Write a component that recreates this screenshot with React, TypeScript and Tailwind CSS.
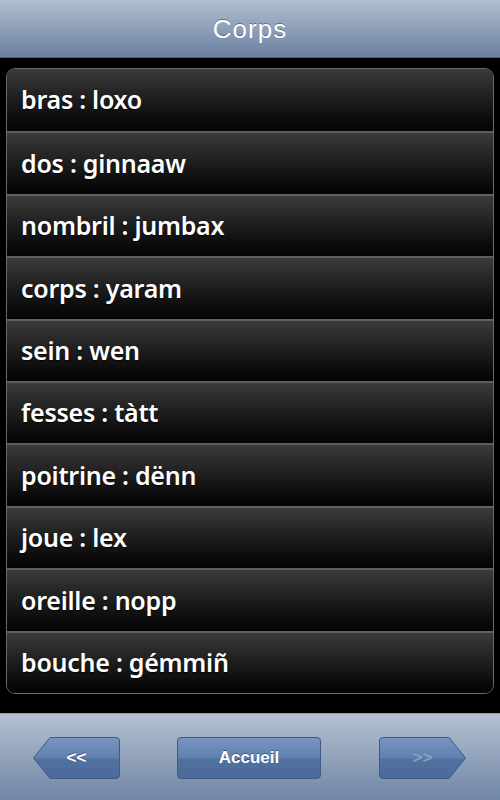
import React from "react";

const items = [
  "bras : loxo",
  "dos : ginnaaw",
  "nombril : jumbax",
  "corps : yaram",
  "sein : wen",
  "fesses : tàtt",
  "poitrine : dënn",
  "joue : lex",
  "oreille : nopp",
  "bouche : gémmiñ",
];

function NavButton({ label, dir, disabled }: { label: string; dir: "left" | "right" | "none"; disabled?: boolean }) {
  const w = dir === "none" ? 144 : 87;
  const h = 42;
  const pt = 17;
  let d = "";
  if (dir === "left") {
    d = `M${pt} 0.5 H${w - 4} Q${w - 0.5} 0.5 ${w - 0.5} 4 V${h - 4} Q${w - 0.5} ${h - 0.5} ${w - 4} ${h - 0.5} H${pt} L0.5 ${h / 2} Z`;
  } else if (dir === "right") {
    d = `M${w - pt} 0.5 H4 Q0.5 0.5 0.5 4 V${h - 4} Q0.5 ${h - 0.5} 4 ${h - 0.5} H${w - pt} L${w - 0.5} ${h / 2} Z`;
  } else {
    d = `M4 0.5 H${w - 4} Q${w - 0.5} 0.5 ${w - 0.5} 4 V${h - 4} Q${w - 0.5} ${h - 0.5} ${w - 4} ${h - 0.5} H4 Q0.5 ${h - 0.5} 0.5 ${h - 4} V4 Q0.5 0.5 4 0.5 Z`;
  }
  const id = `g-${dir}`;
  return (
    <div className="relative" style={{ width: w, height: h }}>
      <svg width={w} height={h} className="absolute inset-0">
        <defs>
          <linearGradient id={id} x1="0" y1="0" x2="0" y2="1">
            <stop offset="0" stopColor="#7a96c0" />
            <stop offset="0.5" stopColor="#6080b0" />
            <stop offset="0.52" stopColor="#51729f" />
            <stop offset="1" stopColor="#4a6a9b" />
          </linearGradient>
        </defs>
        <path d={d} fill={`url(#${id})`} stroke="#3e5a86" strokeWidth="1" />
      </svg>
      <div
        className={`absolute inset-0 flex items-center justify-center text-[17px] font-bold ${disabled ? "text-[#8c9fbd]" : "text-white"}`}
        style={{ fontFamily: "'Liberation Sans', Arial, sans-serif", textShadow: disabled ? "none" : "0 -1px 0 rgba(0,0,0,0.35)" }}
      >
        {label}
      </div>
    </div>
  );
}

export default function App() {
  return (
    <div className="w-[500px] h-[800px] bg-black flex flex-col overflow-hidden">
      <div className="h-[58px] flex items-center justify-center bg-gradient-to-b from-[#b3bfd0] to-[#6b80a2] border-b border-[#4f607c]">
        <span
          className="text-white text-[26px] tracking-[1px] pt-[1px]"
          style={{ fontFamily: "'Liberation Sans', Arial, sans-serif", textShadow: "0 -1px 0 rgba(0,0,0,0.35)" }}
        >
          Corps
        </span>
      </div>
      <div className="flex-1 px-[6px] pt-[10px]">
        <div className="w-[488px] rounded-[9px] border border-[#6a6a6a] overflow-hidden">
          {items.map((t, i) => (
            <div
              key={t}
              className={`h-[62.4px] flex items-center pl-[14px] bg-gradient-to-b from-[#3b3b3b] to-[#040404] ${i > 0 ? "border-t-2 border-[#5e5e5e]" : ""}`}
            >
              <span
                className="text-white text-[25px] font-semibold tracking-[-0.25px]"
                style={{ fontFamily: "'Noto Sans', 'Open Sans', sans-serif", textShadow: "0 1px 1px rgba(0,0,0,0.8)" }}
              >
                {t}
              </span>
            </div>
          ))}
        </div>
      </div>
      <div className="h-[87px] bg-gradient-to-b from-[#b5c1d1] to-[#7086a6] border-t border-[#8a9ab2] flex items-start pt-[23px] pl-[33px]">
        <NavButton label="<<" dir="left" />
        <div className="w-[57px]" />
        <NavButton label="Accueil" dir="none" />
        <div className="w-[58px]" />
        <NavButton label=">>" dir="right" disabled />
      </div>
    </div>
  );
}
